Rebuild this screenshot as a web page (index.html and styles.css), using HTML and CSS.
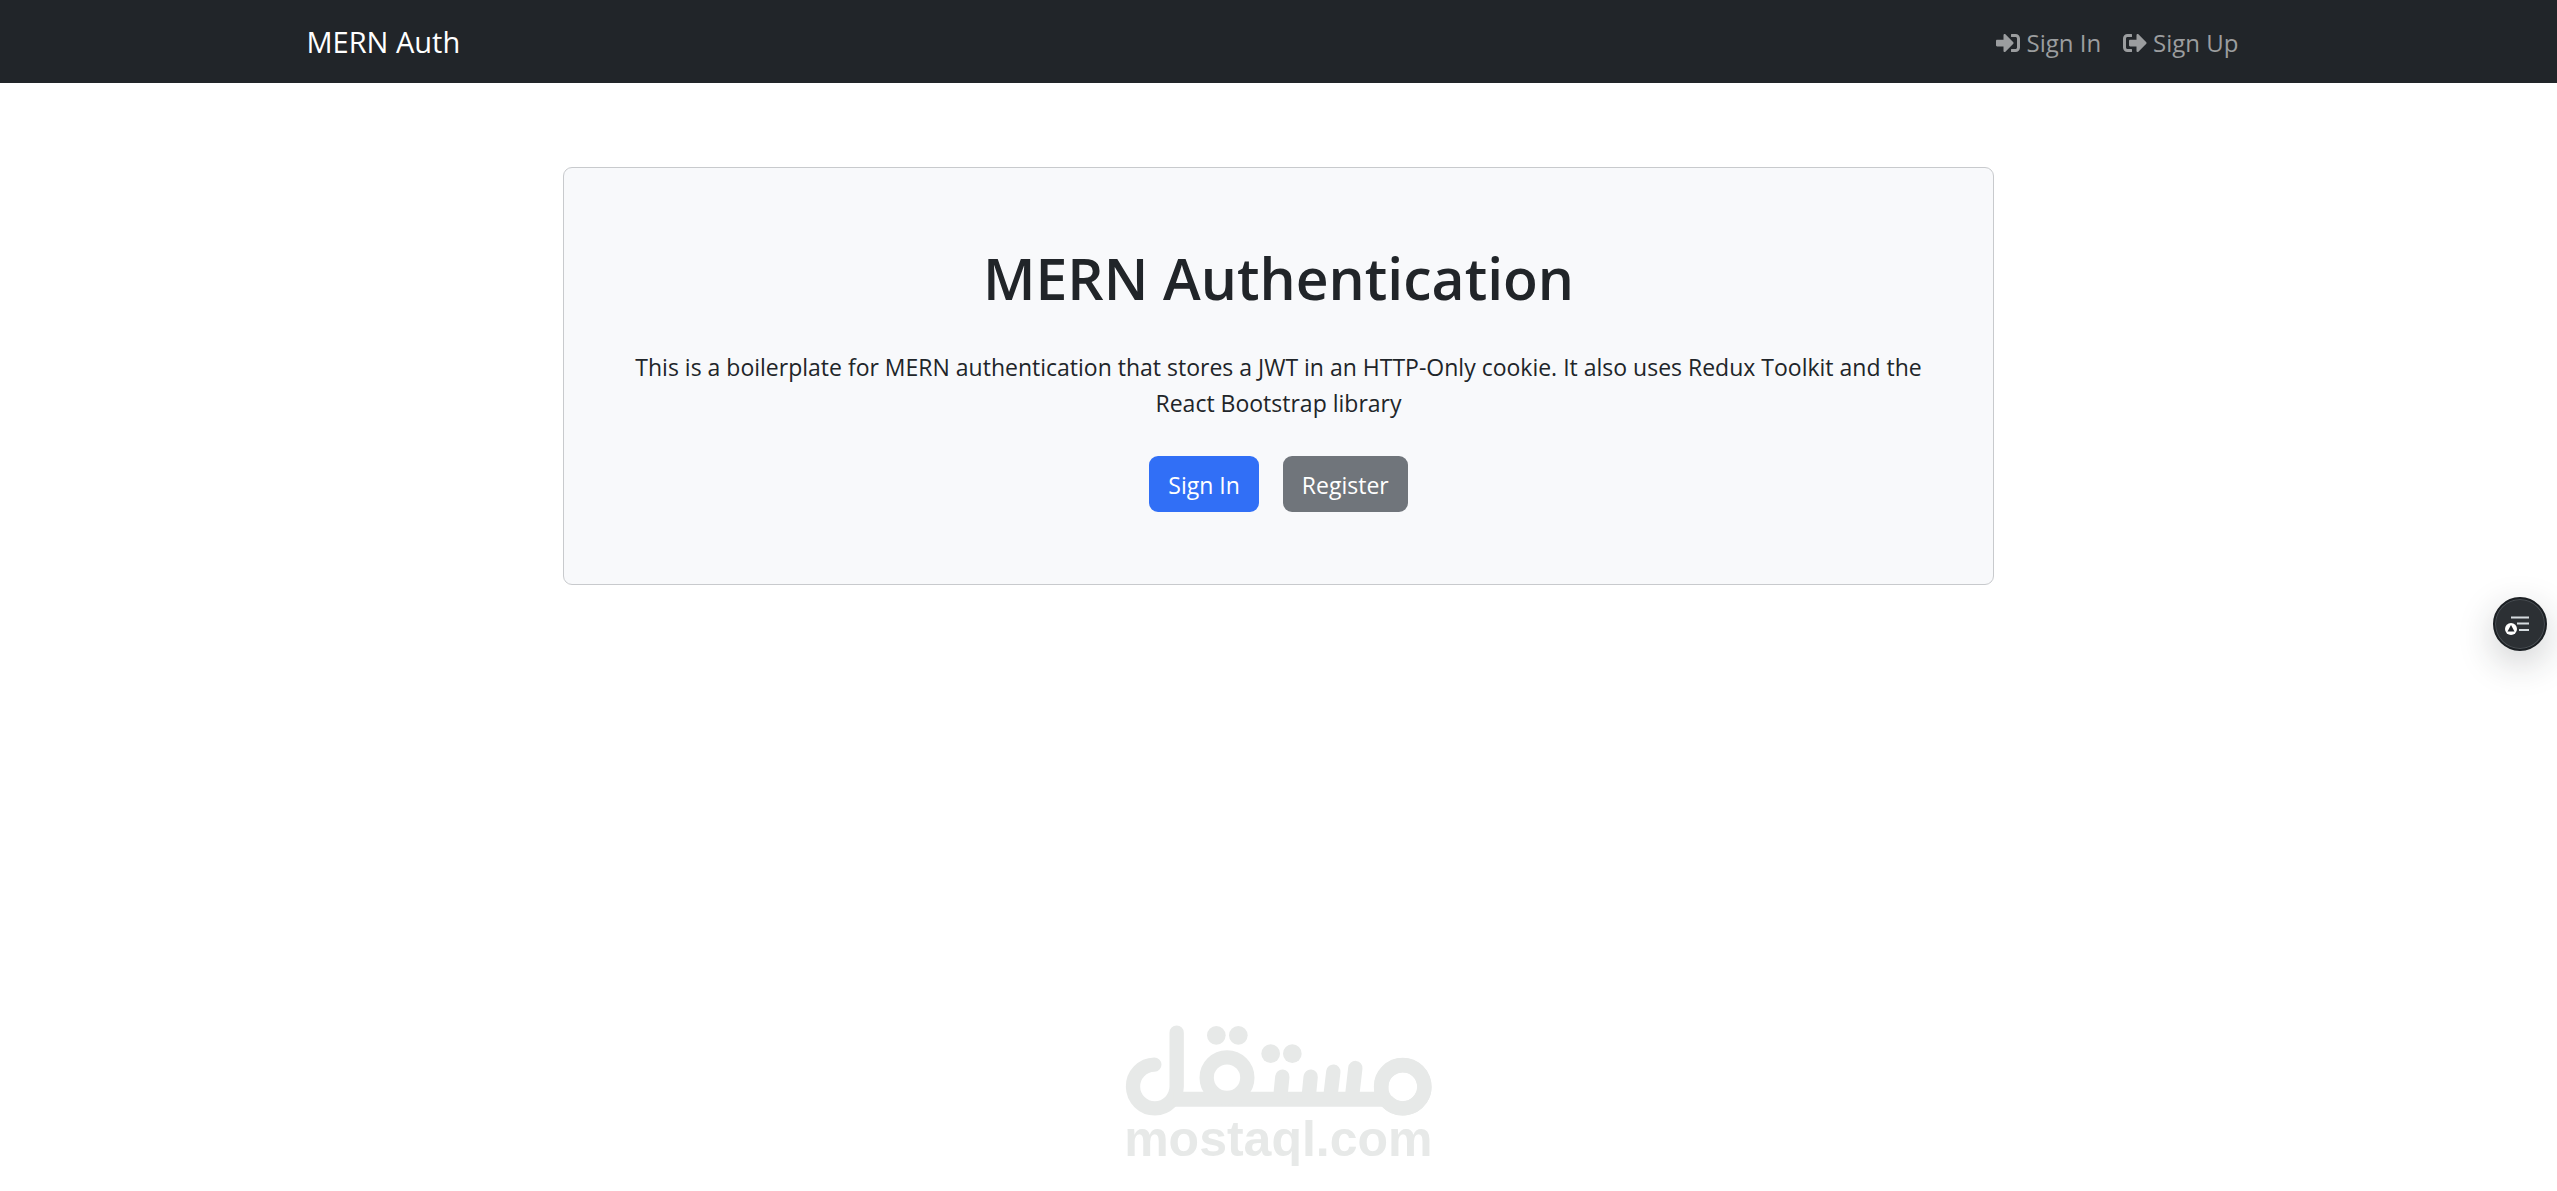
FILE: index.html
```html
<!DOCTYPE html>
<html lang="en">
<head>
<meta charset="utf-8">
<meta name="viewport" content="width=device-width, initial-scale=1">
<title>MERN Auth</title>
<link rel="stylesheet" href="styles.css">
</head>
<body>
<header class="navbar">
  <div class="container navbar-inner">
    <a class="brand" href="#">MERN Auth</a>
    <nav class="nav-links">
      <a class="nav-link" href="#signin">
        <svg class="nav-icon" viewBox="0 0 512 512" aria-hidden="true"><path d="M416 448h-84c-6.600 0-12-5.400-12-12v-40c0-6.600 5.400-12 12-12h84c17.700 0 32-14.300 32-32V160c0-17.700-14.300-32-32-32h-84c-6.600 0-12-5.400-12-12V76c0-6.600 5.400-12 12-12h84c53 0 96 43 96 96v192c0 53-43 96-96 96zm-47-209L201 71c-15-15-41-4.500-41 17v96H24c-13.300 0-24 10.700-24 24v96c0 13.300 10.700 24 24 24h136v96c0 21.500 26 32 41 17l168-168c9.300-9.400 9.300-24.600 0-34z"/></svg>
        <span>Sign In</span>
      </a>
      <a class="nav-link" href="#signup">
        <svg class="nav-icon" viewBox="0 0 512 512" aria-hidden="true"><path d="M497 273L329 441c-15 15-41 4.500-41-17v-96H152c-13.300 0-24-10.700-24-24v-96c0-13.300 10.700-24 24-24h136V88c0-21.400 25.900-32 41-17l168 168c9.300 9.400 9.300 24.600 0 34zM192 436v-40c0-6.600-5.400-12-12-12H96c-17.700 0-32-14.300-32-32V160c0-17.700 14.300-32 32-32h84c6.600 0 12-5.400 12-12V76c0-6.600-5.400-12-12-12H96c-53 0-96 43-96 96v192c0 53 43 96 96 96h84c6.600 0 12-5.400 12-12z"/></svg>
        <span>Sign Up</span>
      </a>
    </nav>
  </div>
</header>
<main class="container hero">
  <section class="card">
    <h1 class="title">MERN Authentication</h1>
    <p class="lead">This is a boilerplate for MERN authentication that stores a JWT in an HTTP-Only cookie. It also uses Redux Toolkit and the React Bootstrap library</p>
    <div class="actions">
      <button class="btn btn-primary" type="button">Sign In</button>
      <button class="btn btn-secondary" type="button">Register</button>
    </div>
  </section>
</main>
<footer class="footer">
  <svg class="logo" viewBox="39 40 933 438" role="img" aria-label="مستقل mostaql.com">
    <g fill="none" stroke="#e7e9e8" stroke-width="43" stroke-linecap="round">
      <path d="M133 165A65.500 65.500 0 1 0 200 231V69"/>
      <path d="M190 269H830" stroke-width="45" stroke-linecap="butt"/>
      <circle cx="351" cy="204" r="61"/>
      <path d="M814 262V231A64.500 64.500 0 1 1 830 274" stroke-linecap="butt"/>
      <circle cx="878" cy="231" r="65"/>
      <path d="M517 201L511 262M602 201L596 262M670 186L661 262M736 175L726 262"/>
    </g>
    <g fill="#e7e9e8">
      <circle cx="319" cy="77" r="28"/><circle cx="385" cy="77" r="28"/>
      <circle cx="482" cy="132" r="28"/><circle cx="547" cy="132" r="28"/>
      <text class="logo-text" x="505" y="439" text-anchor="middle">mostaql.com</text>
    </g>
  </svg>
</footer>
<button class="widget" type="button" aria-label="Open list">
  <svg viewBox="0 0 54 54" aria-hidden="true">
    <path d="M18 20.500H36M24 26.500H36M26 33H36" stroke="#d5dbdf" stroke-width="2"/>
    <circle cx="18" cy="32" r="6" fill="#fff"/>
    <path d="M18 28L21.500 34.500H14.500Z" fill="#23272b"/>
  </svg>
</button>
</body>
</html>
```
FILE: styles.css
```css
* { box-sizing: border-box; }

body {
  margin: 0;
  min-height: 100vh;
  display: flex;
  flex-direction: column;
  background: #fff;
  color: #212529;
  font-family: "Open Sans", "Noto Sans", sans-serif;
  font-size: 23px;
  line-height: 36px;
}

.container {
  width: 100%;
  max-width: 1980px;
  margin: 0 auto;
  padding: 0 18px;
}

.navbar {
  background: #212529;
  padding: 12px 0;
}

.navbar-inner {
  display: flex;
  align-items: center;
  justify-content: space-between;
  min-height: 59px;
}

.brand {
  color: #fff;
  font-size: 29px;
  text-decoration: none;
}

.nav-links {
  display: flex;
  gap: 22px;
  padding: 2px 12px 0 0;
}

.nav-link {
  display: flex;
  align-items: center;
  gap: 6px;
  color: #9b9d9f;
  font-size: 24px;
  text-decoration: none;
}

.nav-icon {
  width: 24px;
  height: 24px;
  fill: currentColor;
}

.hero {
  padding: 84px 36px;
  display: flex;
  justify-content: center;
}

.card {
  width: 75%;
  padding: 74px 66px 72px;
  border: 1px solid #c8cacd;
  border-radius: 9px;
  background: #f8f9fb;
  text-align: center;
}

.title {
  margin: 0 0 35px;
  font-size: 57px;
  font-weight: 600;
  line-height: 72px;
}

.lead { margin: 0 0 35px; }

.actions {
  display: flex;
  justify-content: center;
  gap: 24px;
}

.btn {
  padding: 10px 18px 8px;
  border: 1px solid transparent;
  border-radius: 9px;
  color: #fff;
  font: inherit;
  cursor: pointer;
}

.btn-primary { background: #316ff6; }

.btn-secondary { background: #70757b; }

.footer {
  margin-top: auto;
  padding-bottom: 22px;
  display: flex;
  justify-content: center;
}

.logo {
  width: 311px;
  height: 146px;
}

.logo-text {
  font-family: "Liberation Sans", sans-serif;
  font-size: 150px;
  font-weight: 700;
}

.widget {
  position: fixed;
  right: 10px;
  top: 597px;
  width: 54px;
  height: 54px;
  padding: 0;
  border: 2px solid #1b1f23;
  border-radius: 50%;
  background: #2c3034;
  box-shadow: inset 0 0 0 1px #4a4f54, 0 12px 36px rgb(33 37 41 / 22%);
  cursor: pointer;
}

.widget svg {
  display: block;
  margin: -2px;
  width: 54px;
  height: 54px;
}
```
